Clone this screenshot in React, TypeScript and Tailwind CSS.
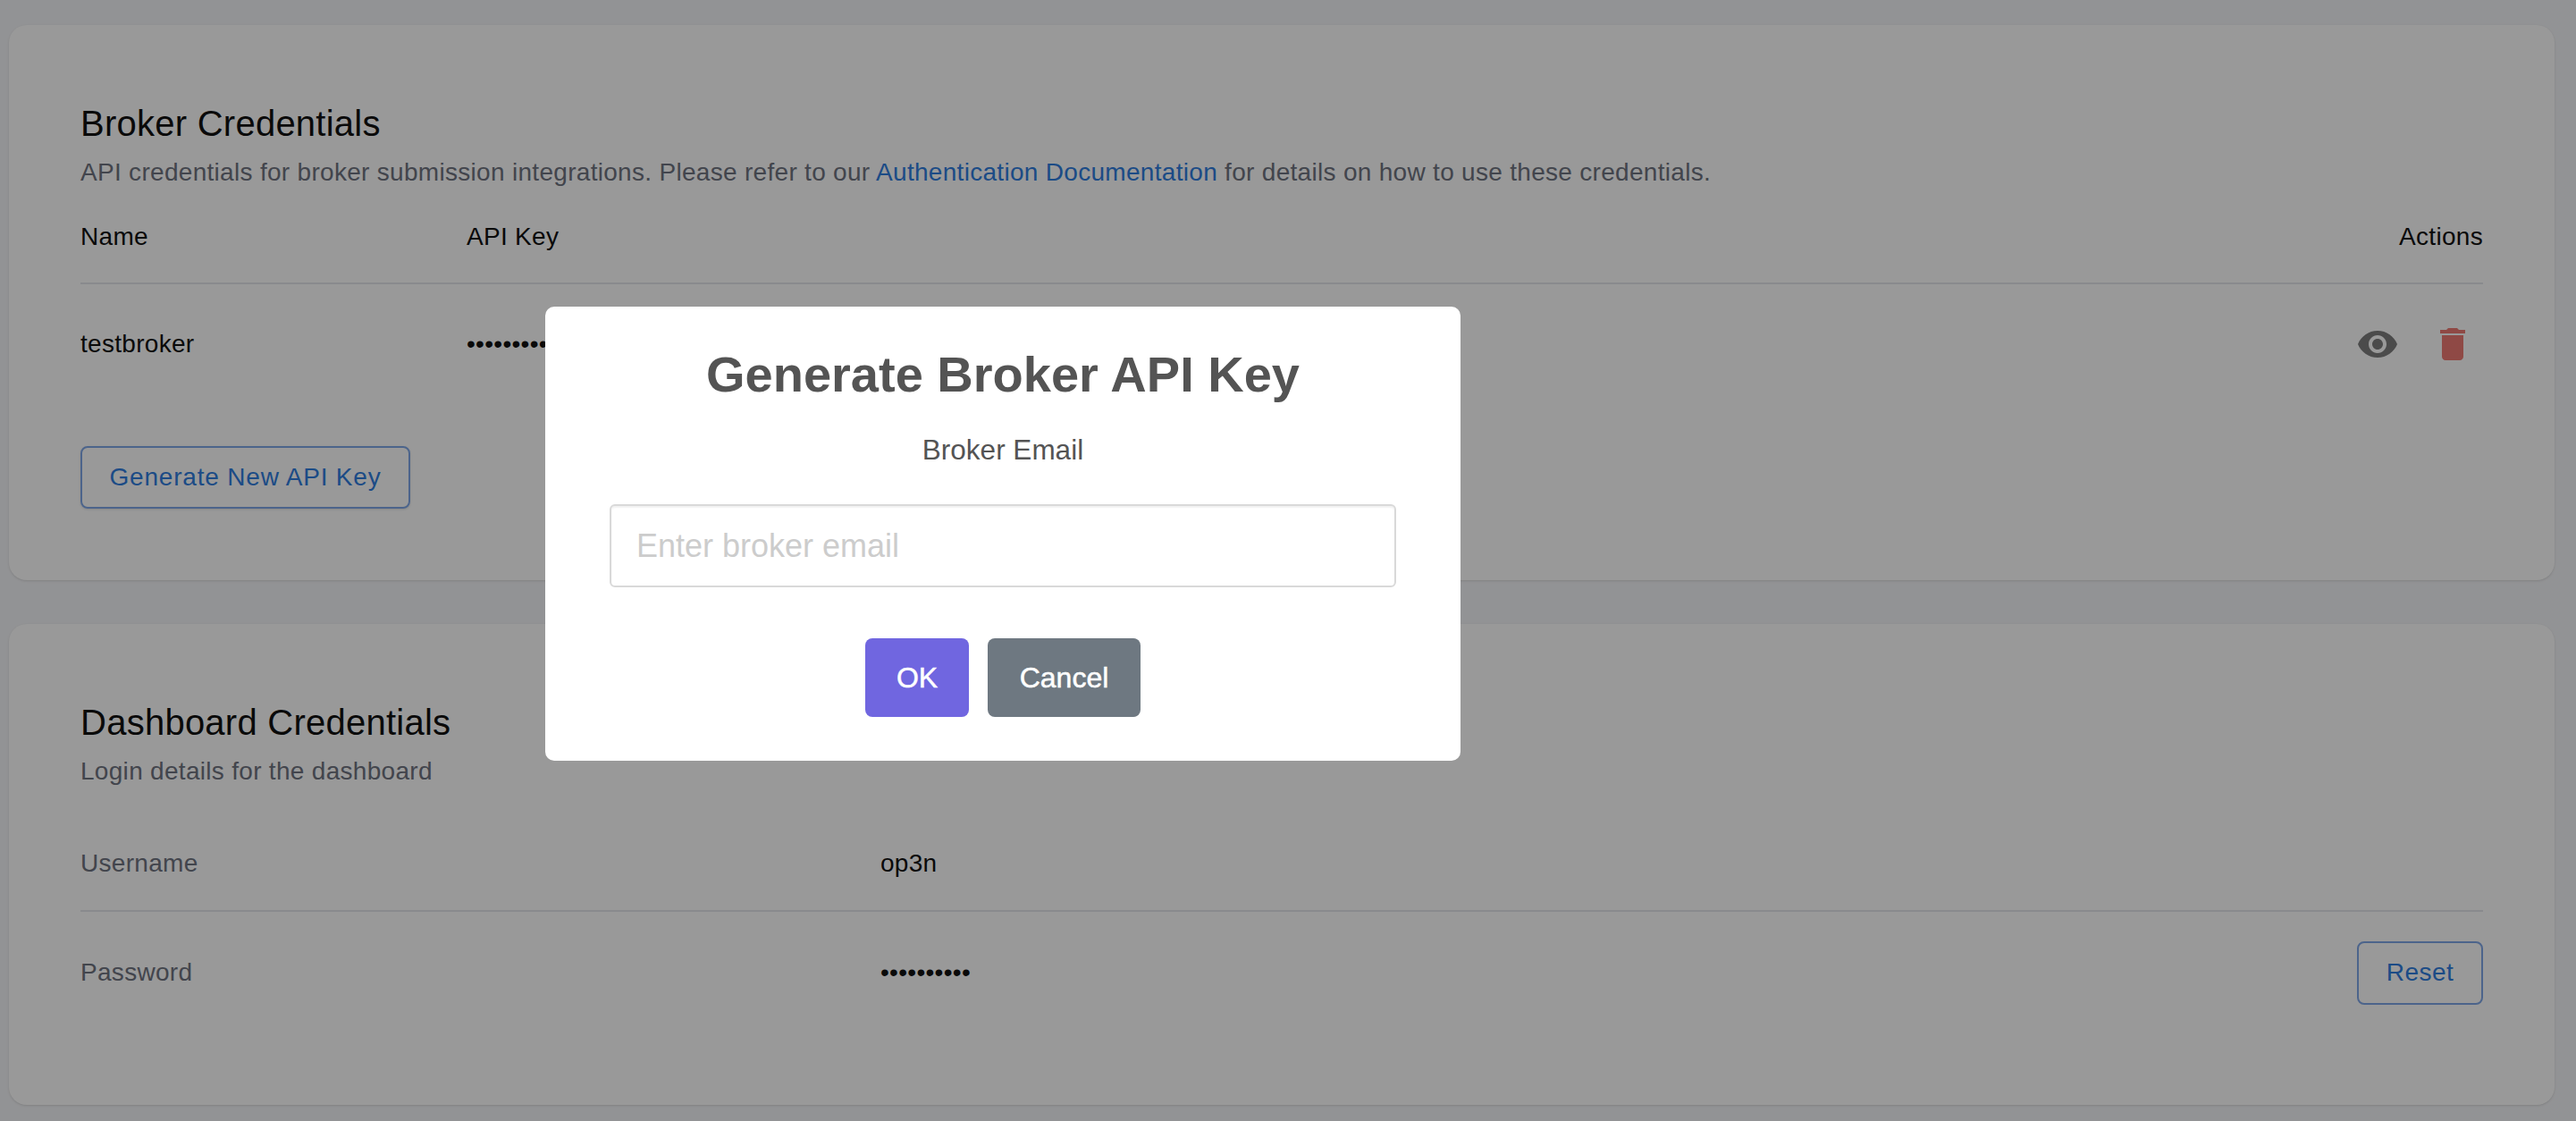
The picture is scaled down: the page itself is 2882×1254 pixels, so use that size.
const sans = { fontFamily: '"Liberation Sans", Arial, sans-serif' };

function EyeIcon() {
  return (
    <svg viewBox="0 0 24 24" className="w-[48px] h-[48px] fill-[#7e7e7e]">
      <path d="M12 4.5C7 4.5 2.73 7.61 1 12c1.73 4.39 6 7.5 11 7.5s9.27-3.11 11-7.5c-1.73-4.39-6-7.5-11-7.5M12 17c-2.76 0-5-2.24-5-5s2.24-5 5-5 5 2.24 5 5-2.24 5-5 5m0-8c-1.66 0-3 1.34-3 3s1.34 3 3 3 3-1.34 3-3-1.34-3-3-3" />
    </svg>
  );
}

function TrashIcon() {
  return (
    <svg viewBox="0 0 24 24" className="w-[48px] h-[48px] fill-[#ee7b73]">
      <path d="M6 19c0 1.1.9 2 2 2h8c1.1 0 2-.9 2-2V7H6zM19 4h-3.5l-1-1h-5l-1 1H5v2h14z" />
    </svg>
  );
}

function BrokerCard() {
  return (
    <section className="bg-white rounded-[20px] shadow-sm pt-[86px] px-[80px] h-[621px] tracking-[0.3px]">
      <h2 className="text-[40px] leading-[48px] text-[#111] tracking-[0.25px]">Broker Credentials</h2>
      <p className="mt-[10px] text-[28px] leading-[42px] text-[#6f7380]">
        API credentials for broker submission integrations. Please refer to our{" "}
        <a className="text-[#2f7de0]">Authentication Documentation</a> for details on how to use
        these credentials.
      </p>
      <div className="mt-[30px] h-[74px] flex justify-between border-b-2 border-[#e5e7eb] text-[28px] leading-[42px] text-[#111]">
        <div className="flex">
          <span className="w-[432px]">Name</span>
          <span>API Key</span>
        </div>
        <span>Actions</span>
      </div>
      <div className="h-[134px] flex items-center justify-between text-[28px] text-[#111]">
        <div className="flex">
          <span className="w-[432px]">testbroker</span>
          <span>••••••••••••••••••••••••••••••••</span>
        </div>
        <div className="flex gap-[36px] pr-[10px]">
          <EyeIcon />
          <TrashIcon />
        </div>
      </div>
      <button className="mt-[47px] h-[70px] w-[369px] rounded-[8px] border-2 border-[#7fa7e8] shadow-sm text-[28px] text-[#2f7de0] tracking-[0.8px]">
        Generate New API Key
      </button>
    </section>
  );
}

function DashboardCard() {
  return (
    <section className="bg-white rounded-[20px] shadow-sm pt-[86px] px-[80px] h-[538px] tracking-[0.3px]">
      <h2 className="text-[40px] leading-[48px] text-[#111] tracking-[0.25px]">Dashboard Credentials</h2>
      <p className="mt-[10px] text-[28px] leading-[42px] text-[#6f7380]">Login details for the dashboard</p>
      <div className="mt-[32px] h-[104px] flex items-center border-b-2 border-[#e5e7eb] text-[28px] pb-[2px]">
        <span className="w-[895px] text-[#6f7380]">Username</span>
        <span className="text-[#111]">op3n</span>
      </div>
      <div className="h-[136px] flex items-center justify-between text-[28px]">
        <div className="flex">
          <span className="w-[895px] text-[#6f7380]">Password</span>
          <span className="text-[#111]">••••••••••</span>
        </div>
        <button className="h-[71px] w-[141px] rounded-[8px] border-2 border-[#7fa7e8] text-[#2f7de0] tracking-[0.5px]">
          Reset
        </button>
      </div>
    </section>
  );
}

function Modal() {
  return (
    <div className="w-[1024px] h-[508px] bg-white rounded-[10px] flex flex-col items-center">
      <h1 className="mt-[40px] text-[56px] leading-[72px] font-bold text-[#545454]">Generate Broker API Key</h1>
      <label className="mt-[24px] text-[31.5px] leading-[48px] text-[#545454]">Broker Email</label>
      <input
        placeholder="Enter broker email"
        className="mt-[37px] w-[880px] h-[93px] px-[28px] rounded-[6px] border-2 border-[#d9d9d9] text-[36px] shadow-[inset_0_2px_2px_rgba(0,0,0,0.06)] outline-none placeholder:text-[#ccc]"
        style={sans}
      />
      <div className="mt-[57px] flex gap-[21px]">
        <button className="w-[116px] h-[88px] rounded-[8px] bg-[#7066e0] text-white text-[32px] [-webkit-text-stroke:0.5px_white]">OK</button>
        <button className="w-[171px] h-[88px] rounded-[8px] bg-[#6e7881] text-white text-[32px] [-webkit-text-stroke:0.5px_white]">Cancel</button>
      </div>
    </div>
  );
}

export default function App() {
  return (
    <div className="relative w-[2882px] h-[1254px] overflow-hidden bg-[#f4f5f8]" style={sans}>
      <main className="flex flex-col gap-[49px] pt-[28px] pl-[10px] pr-[24px]">
        <BrokerCard />
        <DashboardCard />
      </main>
      <div className="absolute inset-0 bg-black/40 flex items-start pl-[610px] pt-[343px]">
        <Modal />
      </div>
    </div>
  );
}
